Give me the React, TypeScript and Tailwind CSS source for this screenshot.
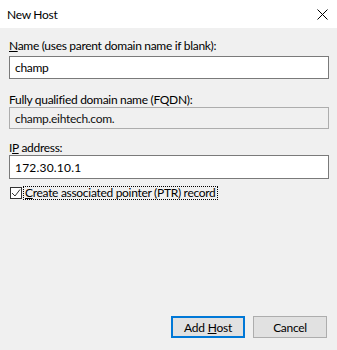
export default function App() {
  return (
    <div className="w-[337px] h-[350px] bg-[#f0f0f0] flex flex-col text-[12px] tracking-[-0.3px] text-black font-['Lato',sans-serif]">
      <div className="h-[28px] bg-white flex items-center justify-between pl-[7px] pr-[8px]">
        <span className="text-[12px] leading-[15px]">New Host</span>
        <svg width="11" height="11" viewBox="0 0 11 11" className="mr-[1px]">
          <path d="M0.5 0.5 L10.5 10.5 M10.5 0.5 L0.5 10.5" stroke="#000" strokeWidth="1" fill="none" />
        </svg>
      </div>

      <div className="flex flex-col pl-[9px] pr-[8px]">
        <label className="mt-[10px] leading-[15px]">
          <span className="underline">N</span>ame (uses parent domain name if blank):
        </label>
        <div className="mt-[3px] h-[23px] bg-white border border-[#7a7a7a] flex items-center px-[5px] leading-[15px]">
          champ
        </div>

        <label className="mt-[13px] leading-[15px]">Fully qualified domain name (FQDN):</label>
        <div className="h-[22px] bg-[#f0f0f0] border border-[#adadad] flex items-center px-[5px] leading-[15px] text-[#111]">
          champ.eihtech.com.
        </div>

        <label className="mt-[11px] leading-[15px]">
          I<span className="underline">P</span> address:
        </label>
        <div className="h-[24px] bg-white border border-[#7a7a7a] flex items-center px-[5px] leading-[15px] tracking-[0.2px]">
          172.30.10.1
        </div>

        <div className="mt-[7px] flex items-center gap-[1px] ml-[1px]">
          <div className="w-[12px] h-[12px] bg-white border border-[#333] flex items-center justify-center">
            <svg width="10" height="10" viewBox="0 0 10 10">
              <path d="M1 5 L4 8 L9 1.5" stroke="#333" strokeWidth="1" fill="none" />
            </svg>
          </div>
          <span className="border border-dotted border-black px-[1px] leading-[12px]">
            <span className="underline">C</span>reate associated pointer (PTR) record
          </span>
        </div>
      </div>

      <div className="mt-auto mb-[12px] flex justify-end gap-[8px] pr-[10px]">
        <button className="w-[74px] h-[22px] bg-[#e1e1e1] border-2 border-[#0078d7] flex items-center justify-center leading-[15px]">
          Add <span className="underline ml-[3px]">H</span>ost
        </button>
        <button className="w-[74px] h-[22px] bg-[#e1e1e1] border border-[#adadad] flex items-center justify-center leading-[15px]">
          Cancel
        </button>
      </div>
    </div>
  );
}
